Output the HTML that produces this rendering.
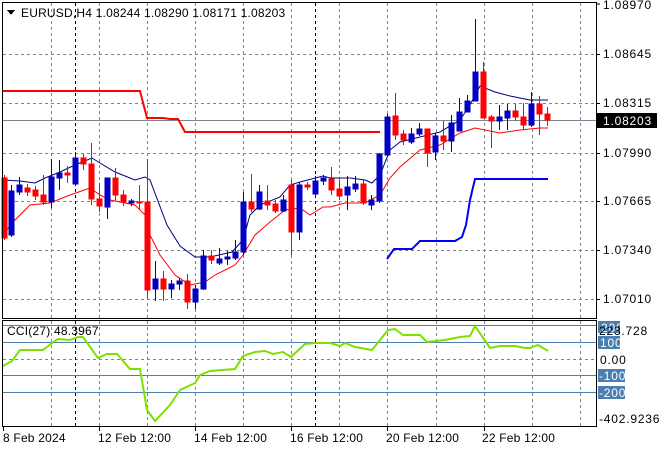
<!DOCTYPE html>
<html><head><meta charset="utf-8"><style>
html,body{margin:0;padding:0;background:#fff;width:660px;height:450px;overflow:hidden}
svg{display:block}
text{font-family:"Liberation Sans",sans-serif;font-size:12px;letter-spacing:0.2px;fill:#000}
.ax text, text.ax{letter-spacing:0.8px}
</style></head><body>
<svg width="660" height="450" viewBox="0 0 660 450" xmlns="http://www.w3.org/2000/svg" shape-rendering="crispEdges">
<rect width="660" height="450" fill="#fff"/>
<g stroke="#7a8591" stroke-dasharray="3,3" stroke-width="1">
<line x1="3" y1="54.5" x2="596" y2="54.5"/><line x1="3" y1="103.5" x2="596" y2="103.5"/><line x1="3" y1="153.5" x2="596" y2="153.5"/><line x1="3" y1="201.5" x2="596" y2="201.5"/><line x1="3" y1="250.5" x2="596" y2="250.5"/><line x1="3" y1="299.5" x2="596" y2="299.5"/>
<line x1="3" y1="359.5" x2="596" y2="359.5"/>
<g>
<line x1="51.5" y1="3" x2="51.5" y2="426"/><line x1="99.5" y1="3" x2="99.5" y2="426"/><line x1="147.5" y1="3" x2="147.5" y2="426"/><line x1="195.5" y1="3" x2="195.5" y2="426"/><line x1="243.5" y1="3" x2="243.5" y2="426"/><line x1="291.5" y1="3" x2="291.5" y2="426"/><line x1="339.5" y1="3" x2="339.5" y2="426"/><line x1="387.5" y1="3" x2="387.5" y2="426"/><line x1="436.5" y1="3" x2="436.5" y2="426"/><line x1="484.5" y1="3" x2="484.5" y2="426"/><line x1="532.5" y1="3" x2="532.5" y2="426"/><line x1="580.5" y1="3" x2="580.5" y2="426"/>
</g>
</g>
<g stroke="#000" stroke-dasharray="3,3"><line x1="75.5" y1="3" x2="75.5" y2="426"/><line x1="315.5" y1="3" x2="315.5" y2="426"/></g>
<g stroke="#4a7fb0"><line x1="3" y1="325.5" x2="596" y2="325.5"/><line x1="3" y1="342.5" x2="596" y2="342.5"/><line x1="3" y1="375.5" x2="596" y2="375.5"/><line x1="3" y1="392.5" x2="596" y2="392.5"/></g>
<line x1="3" y1="120.5" x2="596" y2="120.5" stroke="#7a8591"/>
<polyline fill="none" stroke="#ff0000" stroke-width="2" shape-rendering="auto" points="3,91 140,91 147,118 163,118 170,119 178,119 185,132 380,132"/>
<polyline fill="none" stroke="#0000ff" stroke-width="2" shape-rendering="auto" points="387,259 394,249 412,249 420,241 455,241 462,237 466,225 470,200 475,179 548,179"/>
<polyline fill="none" stroke="#000080" stroke-width="1" shape-rendering="auto" points="3,180 20,181 35,183 45,178 60,172 75,165 92,158 100,163 115,172 135,180 145,177 150,180 167,225 180,246 195,257 210,257 232,252 243,240 250,215 260,205 280,197 290,185 300,182 323,176 330,178 350,178 365,180 372,183 380,175 390,150 400,142 420,137 440,132 460,120 470,105 480,86 495,92 510,96 530,100 548,100"/>
<polyline fill="none" stroke="#ff0000" stroke-width="1" shape-rendering="auto" points="3,235 12,223 30,205 50,203 70,195 90,188 100,195 110,200 135,205 145,215 150,235 160,255 175,275 190,285 205,282 215,275 235,265 243,255 255,235 270,222 285,210 300,208 310,215 323,207 330,207 345,203 365,203 380,195 390,178 400,167 420,150 440,145 460,133 475,128 485,130 500,133 520,130 540,128 548,128"/>
<g stroke-width="1">
<g stroke="#ff0000" fill="#ff0000">
<line x1="4.5" y1="175" x2="4.5" y2="240"/><rect x="2" y="178" width="5" height="60"/>
<line x1="27.5" y1="184" x2="27.5" y2="196"/><rect x="25" y="188" width="5" height="4"/>
<line x1="35.5" y1="186" x2="35.5" y2="200"/><rect x="33" y="190" width="5" height="6"/>
<line x1="43.5" y1="175" x2="43.5" y2="205"/><rect x="41" y="195" width="5" height="7"/>
<line x1="67.5" y1="166" x2="67.5" y2="183"/><rect x="65" y="173" width="5" height="2"/>
<line x1="83.5" y1="154" x2="83.5" y2="170"/><rect x="81" y="158" width="5" height="6"/>
<line x1="91.5" y1="143" x2="91.5" y2="205"/><rect x="89" y="164" width="5" height="35"/>
<line x1="99.5" y1="183" x2="99.5" y2="212"/><rect x="97" y="199" width="5" height="7"/>
<line x1="115.5" y1="168" x2="115.5" y2="201"/><rect x="113" y="178" width="5" height="17"/>
<line x1="123.5" y1="190" x2="123.5" y2="206"/><rect x="121" y="195" width="5" height="7"/>
<line x1="139.5" y1="185" x2="139.5" y2="210"/><rect x="137" y="202" width="5" height="1"/>
<line x1="147.5" y1="159" x2="147.5" y2="298"/><rect x="145" y="202" width="5" height="88"/>
<line x1="163.5" y1="271" x2="163.5" y2="301"/><rect x="161" y="279" width="5" height="10"/>
<line x1="187.5" y1="274" x2="187.5" y2="309"/><rect x="185" y="281" width="5" height="21"/>
<line x1="211.5" y1="250" x2="211.5" y2="264"/><rect x="209" y="256" width="5" height="4"/>
<line x1="251.5" y1="174" x2="251.5" y2="212"/><rect x="249" y="202" width="5" height="7"/>
<line x1="267.5" y1="185" x2="267.5" y2="210"/><rect x="265" y="201" width="5" height="4"/>
<line x1="275.5" y1="200" x2="275.5" y2="213"/><rect x="273" y="204" width="5" height="7"/>
<line x1="291.5" y1="180" x2="291.5" y2="255"/><rect x="289" y="185" width="5" height="47"/>
<line x1="307.5" y1="182" x2="307.5" y2="190"/><rect x="305" y="185" width="5" height="2"/>
<line x1="331.5" y1="167" x2="331.5" y2="195"/><rect x="329" y="179" width="5" height="11"/>
<line x1="339.5" y1="180" x2="339.5" y2="200"/><rect x="337" y="189" width="5" height="7"/>
<line x1="363.5" y1="180" x2="363.5" y2="205"/><rect x="361" y="184" width="5" height="19"/>
<line x1="395.5" y1="93" x2="395.5" y2="140"/><rect x="393" y="116" width="5" height="19"/>
<line x1="403.5" y1="130" x2="403.5" y2="145"/><rect x="401" y="134" width="5" height="6"/>
<line x1="427.5" y1="129" x2="427.5" y2="167"/><rect x="425" y="129" width="5" height="24"/>
<line x1="443.5" y1="121" x2="443.5" y2="150"/><rect x="441" y="136" width="5" height="5"/>
<line x1="483.5" y1="62" x2="483.5" y2="118"/><rect x="481" y="72" width="5" height="46"/>
<line x1="491.5" y1="115" x2="491.5" y2="148"/><rect x="489" y="117" width="5" height="4"/>
<line x1="515.5" y1="104" x2="515.5" y2="121"/><rect x="513" y="111" width="5" height="6"/>
<line x1="523.5" y1="103" x2="523.5" y2="130"/><rect x="521" y="117" width="5" height="8"/>
<line x1="539.5" y1="96" x2="539.5" y2="135"/><rect x="537" y="104" width="5" height="10"/>
<line x1="547.5" y1="107" x2="547.5" y2="126"/><rect x="545" y="114" width="5" height="6"/>
</g>
<g stroke="#0000b4" fill="#0000c8">
<line x1="11.5" y1="185" x2="11.5" y2="237"/><rect x="9" y="191" width="5" height="44"/>
<line x1="19.5" y1="177" x2="19.5" y2="195"/><rect x="17" y="185" width="5" height="7"/>
<line x1="51.5" y1="159" x2="51.5" y2="208"/><rect x="49" y="177" width="5" height="25"/>
<line x1="59.5" y1="160" x2="59.5" y2="190"/><rect x="57" y="173" width="5" height="5"/>
<line x1="75.5" y1="152" x2="75.5" y2="184"/><rect x="73" y="158" width="5" height="26"/>
<line x1="107.5" y1="178" x2="107.5" y2="219"/><rect x="105" y="178" width="5" height="29"/>
<line x1="131.5" y1="199" x2="131.5" y2="206"/><rect x="129" y="201" width="5" height="2"/>
<line x1="155.5" y1="261" x2="155.5" y2="301"/><rect x="153" y="279" width="5" height="10"/>
<line x1="171.5" y1="280" x2="171.5" y2="298"/><rect x="169" y="284" width="5" height="5"/>
<line x1="179.5" y1="278" x2="179.5" y2="290"/><rect x="177" y="281" width="5" height="3"/>
<line x1="195.5" y1="285" x2="195.5" y2="309"/><rect x="193" y="289" width="5" height="13"/>
<line x1="203.5" y1="250" x2="203.5" y2="290"/><rect x="201" y="256" width="5" height="33"/>
<line x1="219.5" y1="248" x2="219.5" y2="265"/><rect x="217" y="259" width="5" height="4"/>
<line x1="227.5" y1="251" x2="227.5" y2="265"/><rect x="225" y="257" width="5" height="2"/>
<line x1="235.5" y1="240" x2="235.5" y2="260"/><rect x="233" y="252" width="5" height="6"/>
<line x1="243.5" y1="192" x2="243.5" y2="255"/><rect x="241" y="202" width="5" height="50"/>
<line x1="259.5" y1="185" x2="259.5" y2="210"/><rect x="257" y="192" width="5" height="17"/>
<line x1="283.5" y1="195" x2="283.5" y2="212"/><rect x="281" y="200" width="5" height="11"/>
<line x1="299.5" y1="182" x2="299.5" y2="240"/><rect x="297" y="185" width="5" height="47"/>
<line x1="315.5" y1="176" x2="315.5" y2="197"/><rect x="313" y="181" width="5" height="13"/>
<line x1="323.5" y1="175" x2="323.5" y2="185"/><rect x="321" y="178" width="5" height="3"/>
<line x1="347.5" y1="176" x2="347.5" y2="210"/><rect x="345" y="187" width="5" height="8"/>
<line x1="355.5" y1="176" x2="355.5" y2="192"/><rect x="353" y="184" width="5" height="5"/>
<line x1="371.5" y1="195" x2="371.5" y2="210"/><rect x="369" y="200" width="5" height="5"/>
<line x1="379.5" y1="153" x2="379.5" y2="203"/><rect x="377" y="154" width="5" height="47"/>
<line x1="387.5" y1="114" x2="387.5" y2="157"/><rect x="385" y="117" width="5" height="38"/>
<line x1="411.5" y1="128" x2="411.5" y2="144"/><rect x="409" y="134" width="5" height="8"/>
<line x1="419.5" y1="123" x2="419.5" y2="136"/><rect x="417" y="129" width="5" height="5"/>
<line x1="435.5" y1="133" x2="435.5" y2="160"/><rect x="433" y="136" width="5" height="16"/>
<line x1="451.5" y1="115" x2="451.5" y2="152"/><rect x="449" y="123" width="5" height="18"/>
<line x1="459.5" y1="98" x2="459.5" y2="131"/><rect x="457" y="112" width="5" height="19"/>
<line x1="467.5" y1="95" x2="467.5" y2="112"/><rect x="465" y="101" width="5" height="11"/>
<line x1="475.5" y1="19" x2="475.5" y2="101"/><rect x="473" y="72" width="5" height="29"/>
<line x1="499.5" y1="105" x2="499.5" y2="130"/><rect x="497" y="117" width="5" height="4"/>
<line x1="507.5" y1="104" x2="507.5" y2="130"/><rect x="505" y="111" width="5" height="7"/>
<line x1="531.5" y1="92" x2="531.5" y2="127"/><rect x="529" y="104" width="5" height="21"/>
</g>
</g>
<polyline fill="none" stroke="#7fe000" stroke-width="2" shape-rendering="auto" points="3,366 12,361 20,350 43,350 52,343 58,339 70,340 78,337 83,337 98,358 107,354 117,354 130,369 140,369 147,410 155,421 170,405 180,390 195,383 200,375 210,371 235,369 243,356 255,352 265,351 273,354 283,352 291,357 305,344 315,343 330,343 340,346 345,343 355,347 372,350 388,330 395,329 403,335 420,335 427,342 445,340 460,337 470,336 475,326 490,348 500,346 515,346 525,348 530,348 538,345 548,351"/>
<g fill="none" stroke="#000">
<rect x="2.5" y="2.5" width="594" height="316"/>
<rect x="2.5" y="320.5" width="594" height="106"/>
</g>
<g stroke="#000">
<line x1="596.5" y1="4" x2="600" y2="4"/><line x1="596.5" y1="54.5" x2="600" y2="54.5"/><line x1="596.5" y1="103.5" x2="600" y2="103.5"/><line x1="596.5" y1="153.5" x2="600" y2="153.5"/><line x1="596.5" y1="201.5" x2="600" y2="201.5"/><line x1="596.5" y1="250.5" x2="600" y2="250.5"/><line x1="596.5" y1="299.5" x2="600" y2="299.5"/>
<line x1="3.5" y1="427" x2="3.5" y2="431"/><line x1="99.5" y1="427" x2="99.5" y2="431"/><line x1="195.5" y1="427" x2="195.5" y2="431"/><line x1="291.5" y1="427" x2="291.5" y2="431"/><line x1="387.5" y1="427" x2="387.5" y2="431"/><line x1="484.5" y1="427" x2="484.5" y2="431"/>
</g>
<polygon points="7,10 15,10 11,15" fill="#000"/>
<text x="21" y="17">EURUSD,H4  1.08244 1.08290 1.08171 1.08203</text>
<text x="7" y="335">CCI(27) 48.3967</text>
<g class="ax">
<text x="603" y="9">1.08970</text>
<text x="603" y="58">1.08645</text>
<text x="603" y="107">1.08315</text>
<text x="603" y="157">1.07990</text>
<text x="603" y="205">1.07665</text>
<text x="603" y="254">1.07340</text>
<text x="603" y="303">1.07010</text>
</g>
<rect x="597" y="113" width="60" height="15" fill="#000"/>
<text class="ax" x="603" y="125" style="fill:#fff">1.08203</text>
<g fill="#4a7fb0">
<rect x="598" y="321" width="22" height="12"/><rect x="598" y="336" width="22" height="13"/><rect x="598" y="369" width="27" height="13"/><rect x="598" y="386" width="27" height="13"/>
</g>
<g class="ax">
<text x="601" y="332" style="fill:#fff">200</text>
<text x="599" y="335">223.728</text>
<text x="600" y="347" style="fill:#fff">100</text>
<text x="600" y="364">0.00</text>
<text x="599" y="380" style="fill:#fff">-100</text>
<text x="599" y="397" style="fill:#fff">-200</text>
<text x="599" y="423">-402.9236</text>
</g>
<text x="3" y="442">8 Feb 2024</text>
<text x="98" y="442">12 Feb 12:00</text>
<text x="194" y="442">14 Feb 12:00</text>
<text x="290" y="442">16 Feb 12:00</text>
<text x="386" y="442">20 Feb 12:00</text>
<text x="482" y="442">22 Feb 12:00</text>
</svg>
</body></html>
